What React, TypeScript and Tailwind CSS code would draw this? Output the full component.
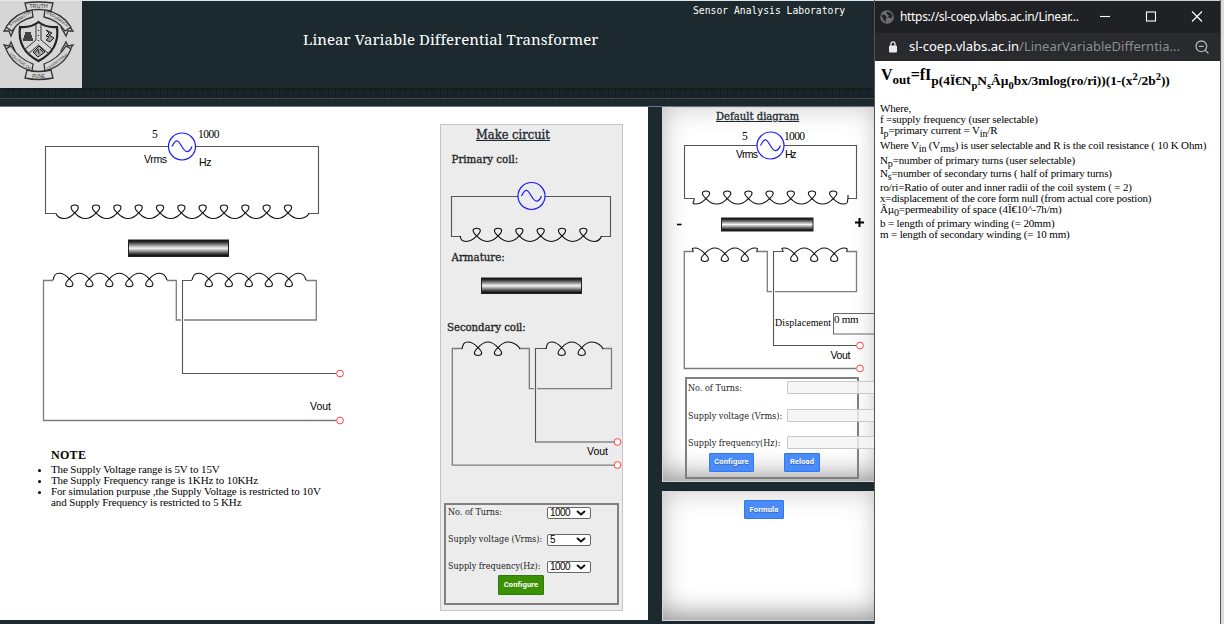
import React from "react";
import { ZoomOut } from "lucide-react";

/** Winding drawn as arcs joined by small loops; works for loops above or below the arcs. */
function coilPath(
  first: number,
  count: number,
  pitch: number,
  arcY: number,
  loopY: number,
  startX: number,
  endX: number,
  wireY: number,
) {
  const dir = loopY > arcY ? 1 : -1;
  const crossY = arcY + (loopY - arcY) * 0.42;
  const h = pitch / 2;
  let d = `M${startX} ${wireY}`;
  const firstArc = first - h;
  d += ` C${startX + 1} ${(wireY + arcY) / 2} ${firstArc - 5} ${arcY} ${firstArc} ${arcY}`;
  for (let i = 0; i < count; i++) {
    const x = first + i * pitch;
    d += ` C${x - h + 4} ${arcY} ${x - 3.5} ${crossY - dir * 3.8} ${x} ${crossY}`;
    d += ` C${x + 5.2} ${crossY + dir * 4.6} ${x + 4.4} ${loopY} ${x} ${loopY}`;
    d += ` C${x - 4.4} ${loopY} ${x - 5.2} ${crossY + dir * 4.6} ${x} ${crossY}`;
    d += ` C${x + 3.5} ${crossY - dir * 3.8} ${x + h - 4} ${arcY} ${x + h} ${arcY}`;
  }
  const last = first + (count - 1) * pitch + h;
  d += ` C${last + 5} ${arcY} ${endX - 1} ${(wireY + arcY) / 2} ${endX} ${wireY}`;
  return d;
}

function Wire({ d, soft }: { d: string; soft?: boolean }) {
  return (
    <path d={d} fill="none" stroke={soft ? "#7c7c7c" : "#555"} strokeWidth={soft ? 1.3 : 1.1} />
  );
}

function Coil({ d }: { d: string }) {
  return <path d={d} fill="none" stroke="#111" strokeWidth="1.1" />;
}

function Source({ x, y }: { x: number; y: number }) {
  return (
    <g fill="none" stroke="#1a1aff" strokeWidth="1.2">
      <circle cx={x} cy={y} r="13.5" />
      <path
        d={`M${x - 10} ${y} C${x - 8} ${y - 4} ${x - 6} ${y - 6} ${x - 4.5} ${y - 5.5} C${x - 1.5} ${y - 4.5} ${x + 1} ${y + 5} ${x + 5} ${y + 5.2} C${x + 7} ${y + 5.2} ${x + 9} ${y + 2.5} ${x + 10} ${y}`}
      />
    </g>
  );
}

function Terminal({ x, y }: { x: number; y: number }) {
  return <circle cx={x} cy={y} r="3.4" fill="#fff" stroke="#ff4040" strokeWidth="1" />;
}

function Core({ x, y, w, h, id }: { x: number; y: number; w: number; h: number; id: string }) {
  return (
    <g>
      <defs>
        <linearGradient id={id} x1="0" x2="0" y1="0" y2="1">
          <stop offset="0" stopColor="#000" />
          <stop offset="0.15" stopColor="#3c3c3c" />
          <stop offset="0.5" stopColor="#f4f4f4" />
          <stop offset="0.85" stopColor="#333" />
          <stop offset="1" stopColor="#000" />
        </linearGradient>
      </defs>
      <rect x={x} y={y} width={w} height={h} fill={`url(#${id})`} stroke="#222" strokeWidth="1" />
    </g>
  );
}

function Label({
  x,
  y,
  w,
  serif,
  size,
  children,
}: {
  x: number;
  y: number;
  w: number;
  serif?: boolean;
  size?: number;
  children: string;
}) {
  return (
    <text
      x={x}
      y={y}
      textLength={w}
      fontSize={size ?? (serif ? 11.5 : 10.5)}
      className={
        serif
          ? "fill-black font-['Liberation_Serif',serif]"
          : "fill-black font-['Liberation_Sans',sans-serif]"
      }
    >
      {children}
    </text>
  );
}

function Crest() {
  const ribbon = { fill: "#d6d6d6", stroke: "#333", strokeWidth: 1.3 };
  return (
    <svg width="82" height="87" viewBox="0 1 82 87" className="block bg-[#d6d6d6]">
      <g {...ribbon}>
        <path d="M10 22 L4 31 L9 31 L11 36 L15 27 Z" />
        <path d="M66 22 L73 31 L68 31 L66 36 L61 27 Z" />
        <path d="M10 55 L4 45 L9 46 L11 42 L15 51 Z" />
        <path d="M66 55 L73 45 L68 46 L66 42 L61 51 Z" />
        <path d="M6 27 Q15 13 32 10 L33 17 Q19 20 12 31 Z" />
        <path d="M71 27 Q62 13 45 10 L44 17 Q58 20 65 31 Z" />
        <path d="M6 49 Q13 66 32 71 L33 64 Q19 59 11 46 Z" />
        <path d="M71 49 Q64 66 45 71 L44 64 Q58 59 66 46 Z" />
        <path d="M25 3 Q38 1 53 3 L51 11 Q38 8 27 11 Z" />
        <path d="M25 78 Q38 81 53 78 L51 70 Q38 73 27 70 Z" />
      </g>
      <g className="fill-[#333] font-['Liberation_Sans',sans-serif]" fontSize="4.5" textAnchor="middle">
        <text x="38.5" y="8" fontSize="5.5">TRUTH</text>
        <text transform="translate(20.500 20) rotate(-33)">STRENGTH</text>
        <text transform="translate(57 20) rotate(33)" fontSize="4">ENDURANCE</text>
        <text transform="translate(19.500 62.500) rotate(37)" fontSize="4">COLLEGE OF</text>
        <text transform="translate(58 62.500) rotate(-37)" fontSize="3.6">ENGINEERING</text>
        <text x="38.5" y="77.5">PUNE</text>
      </g>
      <path
        d="M20 27 Q31 28 38.500 22 Q46 28 57 27 Q60 50 38.500 61 Q17 50 20 27 Z"
        fill="#d6d6d6"
        stroke="#222"
        strokeWidth="2.2"
      />
      <path
        d="M36 25 V40 L24 50 M41 25 V40 L53 50 M38.500 45 L28 54 M38.500 45 L49 54"
        fill="none"
        stroke="#333"
        strokeWidth="1"
      />
      <path d="M25 32 H31 V35 H32 V38 H33 V41 H23 V38 H24 V35 H25 Z" fill="#444" />
      <path d="M46 30 L52 33 L49 35 L54 38 L50 42 L46 40 L49 37 L46 36 L49 33 Z" fill="#999" stroke="#222" />
      <path d="M33 52 L39 46 L45 52 L38 57 Z M35 53 L38 49 L39 54 M40 49 L43 52" fill="#aaa" stroke="#222" />
      <path d="M38.500 30 v1 M38.500 35 v1 M38.500 40 v1" stroke="#333" strokeWidth="1.3" />
    </svg>
  );
}

function Header() {
  return (
    <header className="h-[107px] border-t border-[#dfe8e6] bg-[#1c292e]">
      <div className="flex h-[87px]">
        <Crest />
        <h1 className="flex-1 whitespace-nowrap pl-[221px] pt-[29px] font-['Noto_Serif','DejaVu_Serif',serif] text-[15px] leading-[18px] font-normal tracking-[0.060px] text-white [font-stretch:condensed]">
          <span>Linear Variable Differential Transformer</span>
        </h1>
        <div className="w-[181px] whitespace-nowrap pt-[3px] font-['DejaVu_Sans_Mono',monospace] text-[9.720px] leading-[14px] text-white">
          Sensor Analysis Laboratory
        </div>
      </div>
      <div className="mt-[2px] h-[9px] border-b border-[#454545] bg-[repeating-linear-gradient(90deg,#19252a_0px,#19252a_6px,#111d21_6px,#111d21_7px)] shadow-[0_-1px_2px_#111]" />
      <div className="h-[8px] border-b border-[#6a7376]" />
    </header>
  );
}

function MainDiagram() {
  return (
    <svg width="430" height="323" viewBox="0 107 430 323" className="block">
      <Wire d="M168 146.500 H45.500 V213.500 H56 M196 146.500 H318.500 V213.500 H308" />
      <Coil d={coilPath(74.7, 11, 21.33, 218.5, 205, 56, 309, 213.5)} />
      <Source x={182} y={146.5} />
      <Label x={152} y={138} w={5.5} serif>5</Label>
      <Label x={198} y={138} w={21.5} serif>1000</Label>
      <Label x={144} y={163} w={23}>Vrms</Label>
      <Label x={199} y={166} w={12.5}>Hz</Label>
      <Core x={128.5} y={240} w={100} h={16.5} id="core-main" />
      <Wire d="M53 280.500 H43.500 V420.500 H336 M167 280.500 H176.300 V320 H316.300 V280.500 H306" soft />
      <path d="M182.500 315 V324" stroke="#fff" strokeWidth="3" />
      <Wire d="M192 280.500 H182.500 V373.500 H336" />
      <Coil d={coilPath(69.3, 5, 20, 273.3, 286.7, 53, 167, 280)} />
      <Coil d={coilPath(208.8, 5, 20, 273.3, 286.7, 192, 306, 280)} />
      <Terminal x={340} y={373.5} />
      <Terminal x={340} y={420.5} />
      <Label x={310} y={410} w={21}>Vout</Label>
    </svg>
  );
}

function Notes() {
  return (
    <div className="pl-[51px] pt-[17px] font-['Liberation_Serif',serif] text-black">
      <h2 className="mb-[1px] text-[12px] leading-[16px] font-bold tracking-[0.3px]">NOTE</h2>
      <ul className="w-[330px] list-outside list-disc whitespace-nowrap text-[11px] leading-[11px] tracking-[-0.125px]">
        <li>The Supply Voltage range is 5V to 15V</li>
        <li>The Supply Frequency range is 1KHz to 10KHz</li>
        <li>
          For simulation purpuse ,the Supply Voltage is restricted to 10V
          <br />
          and Supply Frequency is restricted to 5 KHz
        </li>
      </ul>
    </div>
  );
}

function SelectRow({ label, value }: { label: string; value: string }) {
  return (
    <div className="flex h-[27.200px] items-start">
      <span className="w-[99px] whitespace-nowrap font-['DejaVu_Serif',serif] text-[9px] leading-[13px] text-[#222] [font-stretch:condensed]">
        {label}
      </span>
      <span className="mt-[1px] flex h-[12px] w-[44px] items-center justify-between rounded-[2px] border border-[#666] bg-white pl-[2px] pr-[4px] font-['Liberation_Sans',sans-serif] text-[10px] leading-[10px] tracking-[-0.600px] text-black">
        {value}
        <svg width="10" height="6" viewBox="0 0 10 6">
          <path d="M1 1 L5 4.500 L9 1" fill="none" stroke="#111" strokeWidth="1.900" />
        </svg>
      </span>
    </div>
  );
}

const sectionTitle =
  "whitespace-nowrap font-['DejaVu_Serif',serif] text-[11.400px] leading-[14px] font-normal text-[#222] [font-stretch:condensed] [-webkit-text-stroke:0.300px_#222]";

function MakeCircuit() {
  return (
    <section className="mt-[17px] flex h-[487px] w-[183px] flex-col border border-[#c4c4c4] bg-[#ececec]">
      <h2 className="mt-[2px] pl-[35px] font-['DejaVu_Serif',serif] text-[12.800px] leading-[16px] font-normal text-[#1c292e] underline [font-stretch:condensed] [-webkit-text-stroke:0.350px_#1c292e]">
        Make circuit
      </h2>
      <h3 className={`mt-[9px] pl-[10.500px] ${sectionTitle}`}>Primary coil:</h3>
      <svg width="181" height="84" viewBox="441 166 181 84" className="block shrink-0">
        <Wire d="M518 196.500 H451.500 V236.500 H461 M545 196.500 H610.500 V236.500 H601" />
        <Coil d={coilPath(476.7, 6, 21.33, 241.5, 228.3, 460, 601.5, 236)} />
        <Source x={531.5} y={196} />
      </svg>
      <h3 className={`pl-[10.500px] ${sectionTitle}`}>Armature:</h3>
      <svg width="181" height="56" viewBox="441 264 181 56" className="block shrink-0">
        <Core x={481.5} y={278} w={100} h={15.5} id="core-make" />
      </svg>
      <h3 className={`pl-[6px] ${sectionTitle} tracking-[-0.100px]`}>Secondary coil:</h3>
      <svg width="181" height="168" viewBox="441 334 181 168" className="block shrink-0">
        <Wire d="M462 348.500 H452.300 V465.200 H614 M519 348.500 H529.300 V388.700 H611.500 V348.500 H602" soft />
        <path d="M535.500 384 V393" stroke="#ececec" strokeWidth="3" />
        <Wire d="M546 348.500 H535.500 V442 H614" />
        <Coil d={coilPath(478, 2, 20, 342, 355.5, 462, 520, 349)} />
        <Coil d={coilPath(561.7, 2, 20, 342, 355.5, 546, 603, 349)} />
        <Terminal x={617.5} y={442} />
        <Terminal x={617.5} y={465} />
        <Label x={587} y={455} w={21}>Vout</Label>
      </svg>
      <div className="ml-[3px] mt-[1px] h-[102px] w-[175px] border-2 border-[#808080] pl-[2px] pt-[1px]">
        <SelectRow label="No. of Turns:" value="1000" />
        <SelectRow label="Supply voltage (Vrms):" value="5" />
        <SelectRow label="Supply frequency(Hz):" value="1000" />
        <button className="-mt-[12.600px] ml-[50px] block h-[20px] w-[46px] rounded-[1px] border border-[#2c7a10] bg-[#3a9104] font-['Roboto',sans-serif] text-[7.500px] leading-[16px] font-bold tracking-[0.150px] text-white">
          Configure
        </button>
      </div>
    </section>
  );
}

const blueButton =
  "block rounded-[1px] border border-[#3079ed] bg-[#4a8bf9] font-['Roboto',sans-serif] text-[7.500px] leading-[16px] font-bold tracking-[0.150px] text-white [text-shadow:0_1px_1px_rgba(0,0,0,0.3)]";
const panel =
  "w-[216px] border border-[#d8d8d8] bg-white shadow-[inset_0_0_28px_rgba(0,0,0,0.2),inset_0_-18px_26px_-12px_rgba(0,0,0,0.3)]";

function InputRow({ label }: { label: string }) {
  return (
    <div className="flex h-[27.500px] w-[200px] items-start">
      <span className="mt-[2px] w-[99px] whitespace-nowrap font-['DejaVu_Serif',serif] text-[9px] leading-[13px] text-[#222] [font-stretch:condensed]">
        {label}
      </span>
      <span className="mt-[1.400px] h-[13px] w-[100px] rounded-[1px] border border-[#c8c8c8] bg-[#f4f4f4]/80" />
    </div>
  );
}

function DefaultDiagram() {
  return (
    <section className={`h-[375px] overflow-hidden ${panel}`}>
      <h2 className="mt-[1px] pl-[53px] font-['DejaVu_Serif',serif] text-[11.200px] leading-[16px] font-normal text-[#1c292e] underline [font-stretch:condensed] [-webkit-text-stroke:0.300px_#1c292e]">
        Default diagram
      </h2>
      <svg width="214" height="252" viewBox="663 125 214 252" className="block">
        <Wire d="M757 145.500 H684.500 V198.500 H694 M784 145.500 H856.500 V198.500 H848" />
        <Coil d={`${coilPath(706, 7, 21.2, 204, 191, 694, 848, 198.500)} V195`} />
        <Source x={770.5} y={145.5} />
        <Label x={742} y={140} w={5.5} serif>5</Label>
        <Label x={784} y={140} w={21} serif>1000</Label>
        <Label x={736} y={158} w={22}>Vrms</Label>
        <Label x={785} y={158} w={11.5}>Hz</Label>
        <path d="M677 224.500 h4.500" stroke="#000" strokeWidth="1.6" />
        <path d="M855 222.500 h9 M859.500 218 v9" stroke="#000" strokeWidth="2" />
        <Core x={721.5} y={218} w={91.5} h={13} id="core-default" />
        <Wire d="M693 251.500 H684.300 V368.500 H856 M757 251.500 H767.300 V291.700 H856.500 V251.500 H847" soft />
        <path d="M773.500 287 V296" stroke="#fff" strokeWidth="3" />
        <Wire d="M783 251.500 H773.500 V345.500 H856" />
        <Coil d={coilPath(704.8, 3, 20, 248, 261.5, 693, 757, 252)} />
        <Coil d={coilPath(794.2, 3, 20, 248, 261.5, 783, 847, 252)} />
        <Label x={775} y={326} w={56} serif size={10}>Displacement</Label>
        <rect x="833.500" y="313.500" width="50" height="20.500" fill="none" stroke="#666" />
        <Label x={834} y={323} w={24.5} serif size={11}>0 mm</Label>
        <Terminal x={860} y={345.5} />
        <Terminal x={860} y={368.5} />
        <Label x={830.5} y={359} w={20}>Vout</Label>
      </svg>
      <div className="ml-[22px] h-[102px] w-[174px] border-2 border-[#808080] pl-[1px] pt-[1px]">
        <InputRow label="No. of Turns:" />
        <InputRow label="Supply voltage (Vrms):" />
        <InputRow label="Supply frequency(Hz):" />
        <div className="-mt-[10px] flex gap-[30px] pl-[21px]">
          <button className={`h-[19px] w-[45px] ${blueButton}`}>Configure</button>
          <button className={`h-[19px] w-[36px] ${blueButton}`}>Reload</button>
        </div>
      </div>
    </section>
  );
}

function FormulaWindow() {
  const line = "whitespace-nowrap";
  const sub = "align-[-3px] text-[10px] leading-[0]";
  const small = "align-[-4px] text-[10.500px]";
  const sup = "align-[5px] text-[10.500px]";
  return (
    <aside className="flex h-[624px] w-[347px] shrink-0 flex-col border-r border-l border-[#555] bg-white">
      <div className="flex h-[33px] items-center border-t border-[#cfcfcf] bg-[#202124] pl-[5px] font-['Noto_Sans',sans-serif] text-[12px] text-white">
        <svg width="14" height="14" viewBox="0 0 14 14">
          <circle cx="7" cy="7" r="6.800" fill="#6b6d70" />
          <path
            d="M2 4.500 L5 5 L7 7.500 L5.500 9 L6 12 L4 11 L3 8 L1.500 6.500 Z M7 1.500 L6.500 3.500 L9 5.500 L8 7 L11 8.500 L12.500 6 L11 3 Z"
            fill="#202124"
          />
        </svg>
        <span className="ml-[6px] w-[184px] whitespace-nowrap text-[12px] tracking-[-0.320px]">
          https://sl-coep.vlabs.ac.in/Linear...
        </span>
        <svg width="120" height="20" viewBox="0 0 120 20" fill="none" stroke="#fff" strokeWidth="1.1">
          <path d="M16 9.500 h10" />
          <rect x="62.500" y="5" width="9" height="9" />
          <path d="M108 4.500 l10 10 M118 4.500 l-10 10" />
        </svg>
      </div>
      <div className="flex h-[28px] items-center bg-[#282a2e] pl-[14px] font-['Noto_Sans',sans-serif] text-[13px] text-white">
        <svg width="8" height="12" viewBox="0 0 8 12">
          <rect x="0" y="4.500" width="8" height="7" rx="1" fill="#e8eaed" />
          <path d="M1.900 5 V3 A2.100 2.100 0 0 1 6.100 3 V5" fill="none" stroke="#e8eaed" strokeWidth="1.200" />
        </svg>
        <span className="ml-[12px] w-[285px] whitespace-nowrap">
          sl-coep.vlabs.ac.in<span className="text-[#8b8e92]">/LinearVariableDifferntia...</span>
        </span>
        <ZoomOut size={16} className="text-[#b0b2b5]" />
      </div>
      <h1 className="h-[42px] whitespace-nowrap pl-[6px] pt-[5px] font-['Liberation_Serif',serif] text-[16px] leading-[18px] font-bold text-black">
        V<span className="align-[-4px] text-[13px] leading-[0]">out</span>=fI
        <span className="align-[-5px] text-[13.400px] leading-[0]">
          p(4Ï€N<span className={small}>p</span>N<span className={small}>s</span>Âµ
          <span className={small}>0</span>bx/3mlog(ro/ri))(1-(x<span className={sup}>2</span>/2b
          <span className={sup}>2</span>))
        </span>
      </h1>
      <div className="pl-[5px] font-['Liberation_Serif',serif] text-[11px] leading-[11px] tracking-[-0.150px] text-black">
        <p className={`h-[11px] ${line}`}>Where,</p>
        <p className={`h-[11px] ${line}`}>f =supply frequency (user selectable)</p>
        <p className={`h-[15px] ${line}`}>
          I<span className={sub}>p</span>=primary current = V<span className={sub}>in</span>/R
        </p>
        <p className={`h-[15px] ${line}`}>
          Where V<span className={sub}>in</span> (V<span className={sub}>rms</span>) is user selectable and R is the
          coil resistance ( 10 K Ohm)
        </p>
        <p className={`h-[13px] ${line}`}>
          N<span className={sub}>p</span>=number of primary turns (user selectable)
        </p>
        <p className={`h-[14px] ${line}`}>
          N<span className={sub}>s</span>=number of secondary turns ( half of primary turns)
        </p>
        <p className={`h-[11px] ${line}`}>ro/ri=Ratio of outer and inner radii of the coil system ( = 2)</p>
        <p className={`h-[11px] ${line}`}>x=displacement of the core form null (from actual core postion)</p>
        <p className={`h-[14px] ${line}`}>
          Âµ<span className={sub}>0</span>=permeability of space (4Ï€10^-7h/m)
        </p>
        <p className={`h-[11px] ${line}`}>b = length of primary winding (= 20mm)</p>
        <p className={`h-[11px] ${line}`}>m = length of secondary winding (= 10 mm)</p>
      </div>
    </aside>
  );
}

export default function App() {
  return (
    <div className="flex h-[624px] w-[1224px] overflow-hidden bg-[#dcdcdc]">
      <div className="h-[624px] w-[874px] shrink-0 overflow-hidden bg-[#1c292e]">
        <Header />
        <main className="flex gap-[14px]">
          <section className="flex h-[513px] w-[648px] shrink-0 bg-white">
            <div className="w-[440px] shrink-0">
              <MainDiagram />
              <Notes />
            </div>
            <MakeCircuit />
          </section>
          <div className="flex shrink-0 flex-col gap-[9px]">
            <DefaultDiagram />
            <section className={`h-[130px] pl-[81px] pt-[8px] ${panel}`}>
              <button className={`h-[19px] w-[40px] ${blueButton}`}>Formula</button>
            </section>
          </div>
        </main>
      </div>
      <FormulaWindow />
    </div>
  );
}
